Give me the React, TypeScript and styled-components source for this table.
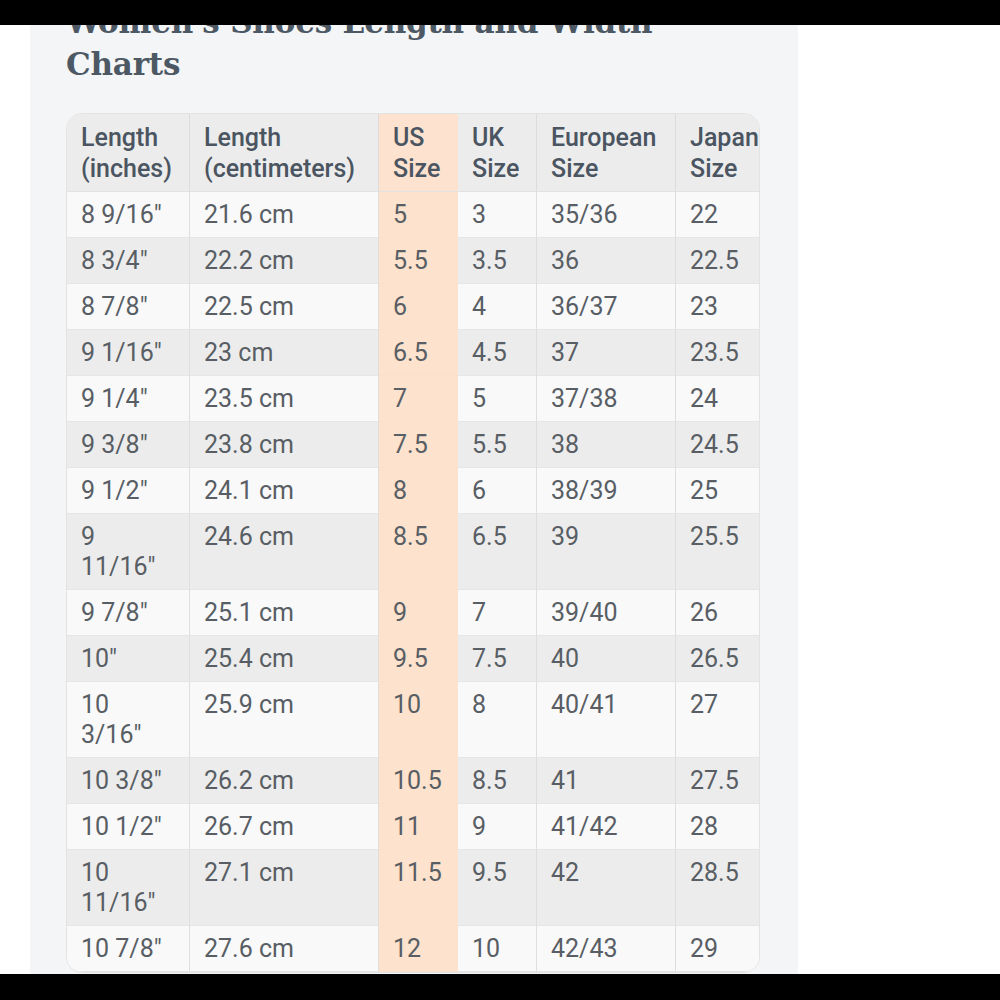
import React from "react";
import styled, { createGlobalStyle } from "styled-components";

const GlobalStyle = createGlobalStyle`
  html, body {
    margin: 0;
    padding: 0;
    background: #000;
  }
  * { box-sizing: border-box; }
`;

const Screen = styled.div`
  width: 1000px;
  height: 1000px;
  display: flex;
  flex-direction: column;
  background: #000;
`;

const StatusBar = styled.div<{ $h: number }>`
  height: ${(p) => p.$h}px;
  flex: 0 0 auto;
  background: #000;
`;

const Viewport = styled.div`
  flex: 1 1 auto;
  overflow: hidden;
  background: #ffffff;
  display: flex;
`;

const Card = styled.section`
  margin-left: 30px;
  width: 768px;
  background: #f4f5f7;
  padding: 0 38px 0 36px;
`;

const Title = styled.h2`
  margin: -24px 0 0 0;
  font-family: "DejaVu Serif", "Liberation Serif", serif;
  font-weight: 700;
  font-size: 31px;
  line-height: 42px;
  color: #4c5863;
  letter-spacing: -0.2px;
`;

const TableFrame = styled.div`
  margin-top: 28px;
  width: 694px;
  border: 1px solid #e3e3e3;
  border-radius: 16px;
  overflow: hidden;
  background: #f9f9fa;
`;

const Table = styled.table`
  width: 692px;
  table-layout: fixed;
  border-collapse: separate;
  border-spacing: 0;
  font-family: Roboto, "Noto Sans", sans-serif;
`;

const HeadCell = styled.th<{ $us?: boolean; $first?: boolean; $last?: boolean }>`
  text-align: left;
  vertical-align: top;
  padding: 8px ${(p) => (p.$first ? 22 : 14)}px 7px 14px;
  font-size: 25px;
  line-height: 31px;
  font-weight: 500;
  color: #4a5561;
  background: ${(p) => (p.$us ? "#fde3cf" : "#ececec")};
  border-bottom: 1px solid #e2e2e2;
  border-right: ${(p) => (p.$last ? "none" : p.$us ? "1px solid #fde3cf" : "1px solid #dcdcdc")};
  white-space: normal;
  overflow: visible;
`;

const Cell = styled.td<{ $us?: boolean; $stripe: boolean; $first?: boolean; $last?: boolean }>`
  vertical-align: top;
  padding: 8px ${(p) => (p.$first ? 22 : 14)}px 7px 14px;
  font-size: 25px;
  line-height: 30px;
  font-weight: 400;
  color: #585e64;
  background: ${(p) => (p.$us ? "#fde2cd" : p.$stripe ? "#ececec" : "#f9f9fa")};
  border-bottom: 1px solid ${(p) => (p.$us ? "#fbe0cb" : "#e6e6e6")};
  border-right: ${(p) => (p.$last ? "none" : p.$us ? "1px solid #fde2cd" : "1px solid #dedede")};
`;

const widths = [123, 189, 79, 79, 139, 83];

const headers = [
  "Length (inches)",
  "Length (centimeters)",
  "US Size",
  "UK Size",
  "European Size",
  "Japan Size",
];

const rows: string[][] = [
  ['8 9/16"', "21.6 cm", "5", "3", "35/36", "22"],
  ['8 3/4"', "22.2 cm", "5.5", "3.5", "36", "22.5"],
  ['8 7/8"', "22.5 cm", "6", "4", "36/37", "23"],
  ['9 1/16"', "23 cm", "6.5", "4.5", "37", "23.5"],
  ['9 1/4"', "23.5 cm", "7", "5", "37/38", "24"],
  ['9 3/8"', "23.8 cm", "7.5", "5.5", "38", "24.5"],
  ['9 1/2"', "24.1 cm", "8", "6", "38/39", "25"],
  ['9 11/16"', "24.6 cm", "8.5", "6.5", "39", "25.5"],
  ['9 7/8"', "25.1 cm", "9", "7", "39/40", "26"],
  ['10"', "25.4 cm", "9.5", "7.5", "40", "26.5"],
  ['10 3/16"', "25.9 cm", "10", "8", "40/41", "27"],
  ['10 3/8"', "26.2 cm", "10.5", "8.5", "41", "27.5"],
  ['10 1/2"', "26.7 cm", "11", "9", "41/42", "28"],
  ['10 11/16"', "27.1 cm", "11.5", "9.5", "42", "28.5"],
  ['10 7/8"', "27.6 cm", "12", "10", "42/43", "29"],
];

export default function App() {
  return (
    <>
      <GlobalStyle />
      <Screen>
        <StatusBar $h={25} />
        <Viewport>
          <Card>
            <Title>Women's Shoes Length and Width Charts</Title>
            <TableFrame>
              <Table>
                <colgroup>
                  {widths.map((w, i) => (
                    <col key={i} style={{ width: w }} />
                  ))}
                </colgroup>
                <thead>
                  <tr>
                    {headers.map((h, i) => (
                      <HeadCell
                        key={h}
                        $us={i === 2}
                        $first={i === 0}
                        $last={i === headers.length - 1}
                      >
                        {h}
                      </HeadCell>
                    ))}
                  </tr>
                </thead>
                <tbody>
                  {rows.map((r, ri) => (
                    <tr key={ri}>
                      {r.map((c, ci) => (
                        <Cell
                          key={ci}
                          $stripe={ri % 2 === 1}
                          $us={ci === 2}
                          $first={ci === 0}
                          $last={ci === r.length - 1}
                        >
                          {c}
                        </Cell>
                      ))}
                    </tr>
                  ))}
                </tbody>
              </Table>
            </TableFrame>
          </Card>
        </Viewport>
        <StatusBar $h={26} />
      </Screen>
    </>
  );
}
